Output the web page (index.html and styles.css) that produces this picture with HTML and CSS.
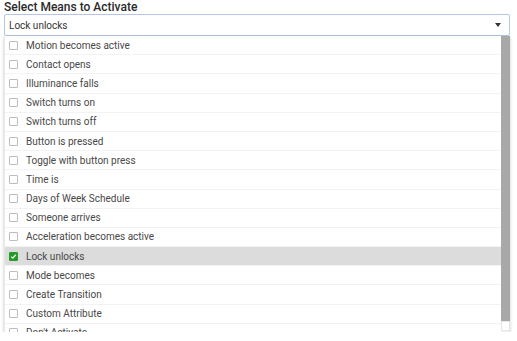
FILE: index.html
```html
<!DOCTYPE html>
<html>
<head>
<title>Select Means to Activate</title>
<link rel="stylesheet" href="styles.css">
</head>
<body>
<div class="field">
<div class="field-label">Select Means to Activate</div>
<div class="select">
<span class="select-value">Lock unlocks</span>
<span class="select-arrow"></span>
</div>
<div class="dropdown">
<ul class="options">
<li class="option"><span class="box"></span>Motion becomes active</li>
<li class="option"><span class="box"></span>Contact opens</li>
<li class="option"><span class="box"></span>Illuminance falls</li>
<li class="option"><span class="box"></span>Switch turns on</li>
<li class="option"><span class="box"></span>Switch turns off</li>
<li class="option"><span class="box"></span>Button is pressed</li>
<li class="option"><span class="box"></span>Toggle with button press</li>
<li class="option"><span class="box"></span>Time is</li>
<li class="option"><span class="box"></span>Days of Week Schedule</li>
<li class="option"><span class="box"></span>Someone arrives</li>
<li class="option"><span class="box"></span>Acceleration becomes active</li>
<li class="option selected"><span class="box checked"><svg width="7" height="7" viewBox="0 0 7 7"><path d="M1.2 3.6 L2.8 5.1 L5.8 1.8" fill="none" stroke="#fff" stroke-width="1.3"/></svg></span>Lock unlocks</li>
<li class="option"><span class="box"></span>Mode becomes</li>
<li class="option"><span class="box"></span>Create Transition</li>
<li class="option"><span class="box"></span>Custom Attribute</li>
<li class="option"><span class="box"></span>Don't Activate</li>
</ul>
<div class="scrollbar">
<div class="thumb"></div>
<div class="scroll-btn"></div>
</div>
</div>
</div>
</body>
</html>
```

FILE: styles.css
```css
/* Means picker dropdown */

body
{ margin: 0;
background: #fff;
font-family: Roboto, "Liberation Sans", sans-serif;
color: #333;
}

div.field
{ padding: 1px 7px 0 4px;
}

div.field-label
{ font-size: 12px;
line-height: 13px;
font-weight: 500;
color: #2a2a2a;
}

div.select
{ display: flex;
align-items: center;
justify-content: space-between;
box-sizing: border-box;
height: 22px;
margin-top: 0;
padding: 0 8px 0 4px;
border: 1px solid #b3c6e6;
border-radius: 2px;
font-size: 10px;
color: #333;
}

span.select-arrow
{ width: 0;
height: 0;
border-left: 3.5px solid transparent;
border-right: 3.5px solid transparent;
border-top: 4px solid #333;
}

div.dropdown
{ display: flex;
height: 296px;
overflow: hidden;
border-left: 1px solid #e8e8e8;
box-shadow: 0 1px 3px rgba(0, 0, 0, 0.22);
}

ul.options
{ flex: 1;
margin: 0;
padding: 0;
list-style: none;
}

li.option
{ display: flex;
align-items: center;
box-sizing: border-box;
height: 19.2px;
padding-left: 4px;
border-bottom: 1px solid #f3f3f3;
font-size: 10px;
color: #484848;
}

li.selected
{ background: #dcdcdc;
}

span.box
{ display: flex;
align-items: center;
justify-content: center;
box-sizing: border-box;
width: 9px;
height: 9px;
margin-right: 8px;
border: 1px solid #bdbdbd;
border-radius: 1px;
background: #fff;
}

span.checked
{ border-color: #2a9a2a;
background: #1e9e24;
}

div.scrollbar
{ display: flex;
flex-direction: column;
width: 9px;
background: #f1f1f1;
}

div.thumb
{ flex: 1;
background: #a8a8a8;
}

div.scroll-btn
{ height: 10px;
margin-bottom: 1px;
box-sizing: border-box;
border: 1px solid #e6e6e6;
background: #fff;
}
```
